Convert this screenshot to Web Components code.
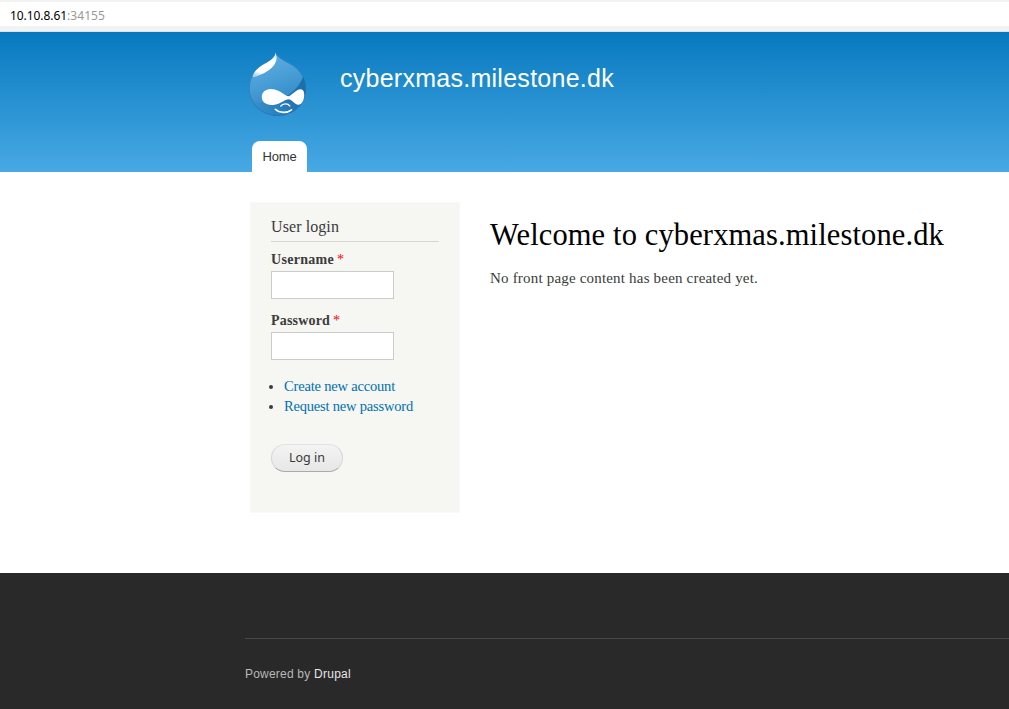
<!DOCTYPE html>
<html lang="en">
<head>
<meta charset="utf-8">
<title>Welcome to cyberxmas.milestone.dk</title>
<style>
html, body { margin: 0; height: 100%; }
body { overflow: hidden; background: #fff; color: #3b3b3b; font-family: "Liberation Serif", Georgia, serif; }
</style>
</head>
<body>
<site-page></site-page>
<script>
const define = (name, html, setup) => customElements.define(name, class extends HTMLElement {
  connectedCallback() {
    if (this.shadowRoot) return;
    this.attachShadow({ mode: 'open' }).innerHTML = html;
    if (setup) setup(this);
  }
});

/* Tracks its text out so that it spans the requested width. */
define('fit-text', `<style>:host{display:inline-block;white-space:pre}</style><slot></slot>`, el => {
  const target = parseFloat(el.getAttribute('w'));
  const natural = el.getBoundingClientRect().width;
  el.style.letterSpacing = ((target - natural) / el.textContent.length) + 'px';
  el.style.width = target + 'px';
});

define('address-bar', `<style>
:host{display:block;box-sizing:border-box;height:32px;background:#f3f3f3;padding-top:2px;border-bottom:1px solid #dfe3e6}
div{height:24px;background:#fff;padding-left:10px;font:12px/27px "Noto Sans",sans-serif;color:#000;display:flex}
.port{color:#999}
</style><div><fit-text w="57">10.10.8.61</fit-text><fit-text class="port" w="38">:34155</fit-text></div>`);

define('site-logo', `<style>:host{display:block;width:60px;height:66px}svg{display:block}</style>
<svg width="60" height="66" viewBox="0 0 60 66">
<defs>
<linearGradient id="b" x1="0" y1="0" x2=".35" y2="1"><stop offset="0" stop-color="#67b2e2"/><stop offset=".5" stop-color="#4a9fd7"/><stop offset="1" stop-color="#2c84c2"/></linearGradient>
<linearGradient id="s" x1="1" y1="0" x2="0" y2=".7"><stop offset="0" stop-color="#1c6aa5"/><stop offset=".55" stop-color="#2277b4"/><stop offset="1" stop-color="#2f88c6" stop-opacity=".3"/></linearGradient>
<linearGradient id="h" x1=".6" y1="0" x2=".3" y2="1"><stop offset="0" stop-color="#d5eafa"/><stop offset=".3" stop-color="#fff"/><stop offset=".8" stop-color="#fff"/><stop offset="1" stop-color="#fff" stop-opacity=".5"/></linearGradient>
<clipPath id="c"><path d="M27.4 .8C29.2 5.6 33 8 39.5 11.1C51 16.6 58 26 58 37.5C58 53.5 45.5 64.9 29.7 64.9C13.5 64.9 1 53 1 37.5C1 26 6.5 18.3 15.8 13.1C22.4 9.4 26.3 7.3 27.4 .8Z"/></clipPath>
</defs>
<g clip-path="url(#c)">
<path fill="url(#b)" d="M0 0h60v66H0z"/>
<path fill="url(#s)" d="M56 23C53 34 44 44 30 49C22 52 12 53 5 50L10 66H60V23Z"/>
<path d="M27.4 .8C29.2 5.6 33 8 39.5 11.1C51 16.6 58 26 58 37.5C58 53.5 45.5 64.9 29.7 64.9C13.5 64.9 1 53 1 37.5C1 26 6.5 18.3 15.8 13.1C22.4 9.4 26.3 7.3 27.4 .8Z" fill="none" stroke="#2473ab" stroke-width="1.6" opacity=".7"/>
<path fill="url(#h)" d="M27.4 1.4C27.3 6 23 9.2 16 13C9 17 5.3 21.5 4.6 25.4C6 27.3 9.4 24.8 13 23.5C21 20.4 28.6 14.2 28.7 6.5Z"/>
</g>
<path fill="#fff" d="M22.5 38C28 37.8 33.5 41.4 38 44.4Q40.4 46 42.5 44.3C46.3 41.4 49.4 38.1 52.7 38.2C55.7 38.4 56.5 41.7 56.2 45C55.9 49.4 53.4 54.2 50.1 53.8C47.2 53.4 44.3 49.6 41.8 48.5Q40 47.7 38.2 48.7C34.2 50.8 29.4 54 23.5 54C17.5 53.9 13.8 50.5 13.8 46C13.8 41.3 17.3 38.2 22.5 38Z"/>
<g fill="none" stroke="#fff" stroke-linecap="round"><path stroke-width="1.4" d="M32.8 55.1C34.5 52.4 40 52 41.8 55"/><path stroke-width="1.6" d="M27.3 58.3C31.5 62.4 39.5 62.2 43.5 58.8"/></g>
</svg>`);

define('site-header', `<style>
:host{display:flex;flex-direction:column;justify-content:space-between;box-sizing:border-box;height:140px;padding:19px 0 0 248px;background:linear-gradient(#0779bf 0%,#48a9e4 100%)}
.brand{display:flex;gap:32px}
h1{margin:12px 0 0;font:25px/30px "Liberation Sans",Arial,sans-serif;color:#fff}
nav{margin-left:4px;width:55px;height:31px;border-radius:8px 8px 0 0;background:#fff;text-align:center;font:13px/31px "Liberation Sans",Arial,sans-serif;color:#333}
</style><div class="brand"><site-logo></site-logo><h1><fit-text w="274">cyberxmas.milestone.dk</fit-text></h1></div><nav><fit-text w="34">Home</fit-text></nav>`);

define('form-field', `<style>
:host{display:block}
label{display:block;font-weight:bold;font-size:14px;line-height:22px;height:22px}
i{font-style:normal;font-weight:normal;font-size:14px;color:#f00;margin-left:3px}
input{display:block;box-sizing:border-box;width:123px;height:28px;border:1px solid #ccc;background:#fff;margin:0;padding:4px;outline:0}
</style><label><slot></slot><i>*</i></label><input>`, el => {
  el.shadowRoot.querySelector('input').type = el.getAttribute('type') || 'text';
});

define('login-block', `<style>
:host{display:block;box-sizing:border-box;width:210px;height:311px;background:#f6f6f2;border:1px solid #f9f9f9;padding:14px 20px}
h2{margin:0;height:24px;border-bottom:1px solid #d6d6d6;font-weight:normal;font-size:16px;line-height:19px}
form-field{margin-top:7px}
form-field+form-field{margin-top:11px}
ul{margin:16px 0 0;padding:0 0 0 13px;font-size:14.5px;line-height:20px}
li{height:20px}
li::marker{font-size:14px}
a{color:#0071b3}
button{display:block;box-sizing:border-box;width:72px;height:28px;margin:28px 0 0;padding:0;border:1px solid #d5d5d5;border-top-color:#e2e2e2;border-bottom-color:#aaa;border-radius:14px;background:linear-gradient(#f3f3f3,#e7e7e7);font:12.5px/26px "Noto Sans",sans-serif;color:#3a3a3a}
</style><h2><fit-text w="68">User login</fit-text></h2>
<form-field><fit-text w="63">Username</fit-text></form-field>
<form-field type="password"><fit-text w="59">Password</fit-text></form-field>
<ul><li><a><fit-text w="111">Create new account</fit-text></a></li><li><a><fit-text w="129">Request new password</fit-text></a></li></ul>
<button><fit-text w="36">Log in</fit-text></button>`);

define('welcome-content', `<style>
:host{display:block;padding-top:15px}
h1{margin:0;font-weight:normal;font-size:30.5px;line-height:36px;color:#000}
p{margin:15px 0 0;font-size:15px;line-height:20px}
</style><h1><fit-text w="454">Welcome to cyberxmas.milestone.dk</fit-text></h1><p><fit-text w="268">No front page content has been created yet.</fit-text></p>`);

define('site-footer', `<style>
:host{display:block;box-sizing:border-box;height:136px;padding:65px 0 0 245px;background:#292929}
div{border-top:1px solid #484848;padding-top:25px;font:12px/20px "Liberation Sans",Arial,sans-serif;color:#b8b8b8;display:flex}
a{color:#e6e6e6}
</style><div><fit-text w="69">Powered by </fit-text><a><fit-text w="37">Drupal</fit-text></a></div>`);

define('site-page', `<style>
:host{display:block;height:709px;background:#fff}
main{display:flex;gap:30px;box-sizing:border-box;height:401px;padding:30px 0 0 250px}
</style><address-bar></address-bar><site-header></site-header><main><login-block></login-block><welcome-content></welcome-content></main><site-footer></site-footer>`);
</script>
</body>
</html>
